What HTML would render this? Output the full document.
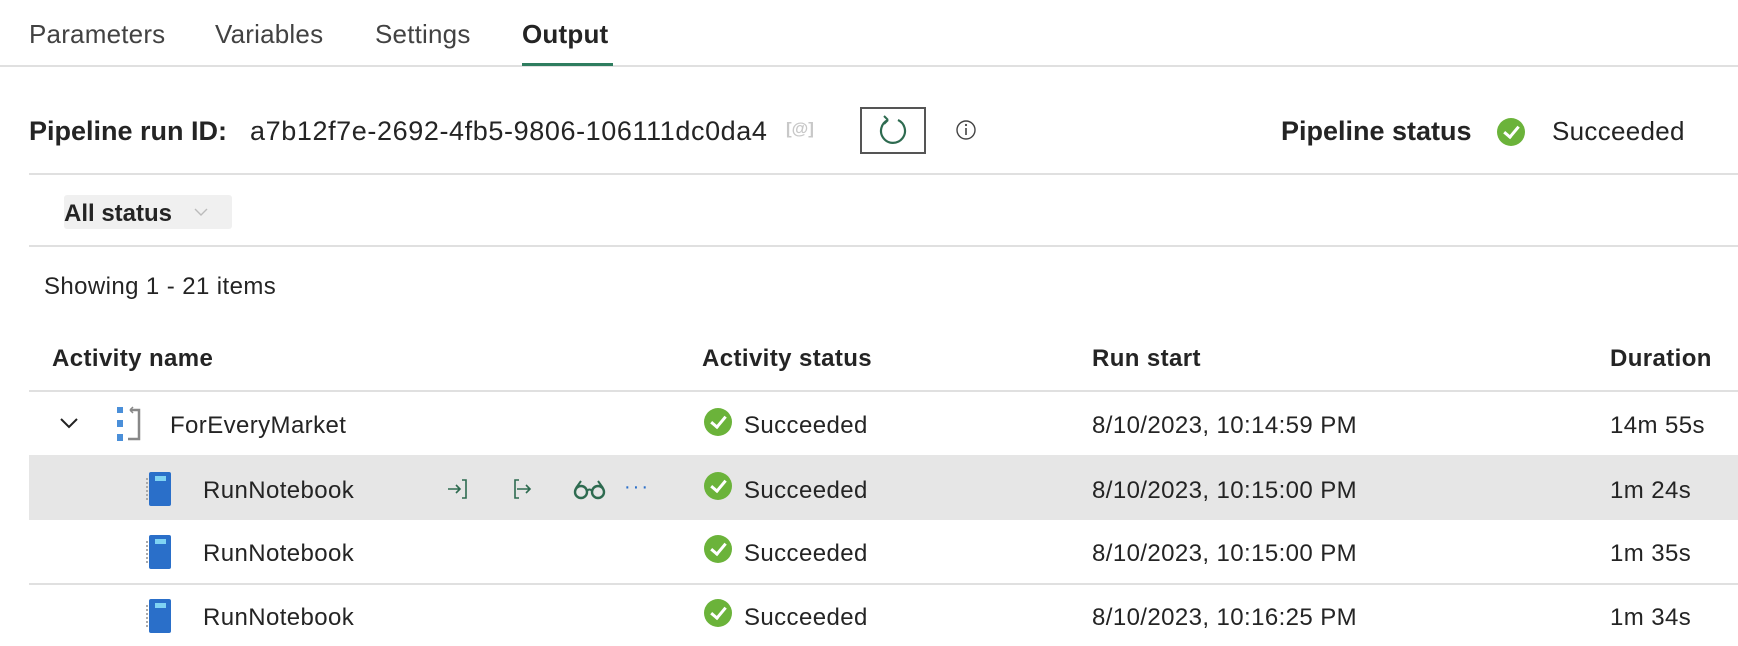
<!DOCTYPE html>
<html><head><meta charset="utf-8"><style>
*{margin:0;padding:0;box-sizing:border-box}
body{width:1738px;height:646px;background:#fff;font-family:"Liberation Sans",sans-serif;color:#242424;position:relative;overflow:hidden}
.a{position:absolute;white-space:nowrap}
.t{font-size:26px;color:#424242;top:19px;letter-spacing:0.2px}
.l{position:absolute;height:2px;background:#e0e0e0}
.r{font-size:24px;letter-spacing:0.4px}
.ck{position:absolute;width:28px;height:28px;border-radius:50%;background:#6bb33a}
.ck:after{content:"";position:absolute;left:10px;top:5px;width:6px;height:12px;border:solid #fff;border-width:0 3px 3px 0;transform:rotate(40deg)}
.nb{position:absolute;width:22px;height:34px;background:#2a6fc9;border-radius:2px}
.nb:before{content:"";position:absolute;left:6px;top:4px;width:11px;height:5px;background:#7fd3f3}
.nb:after{content:"";position:absolute;left:-3px;top:6px;width:3px;height:22px;border-left:2px dotted #aaa}
</style></head><body>
<div class="a t" style="left:29px">Parameters</div>
<div class="a t" style="left:215px">Variables</div>
<div class="a t" style="left:375px">Settings</div>
<div class="a t" style="left:522px;color:#242424;font-weight:600">Output</div>
<div class="l" style="left:0;width:1738px;top:65px"></div>
<div style="position:absolute;left:522px;width:91px;top:63px;height:3px;background:#2e7d5f"></div>

<div class="a" style="left:29px;top:116px;font-size:27px;font-weight:bold">Pipeline run ID:</div>
<div class="a" style="left:250px;top:116px;font-size:27px;letter-spacing:0.6px">a7b12f7e-2692-4fb5-9806-106111dc0da4</div>
<div class="a" style="left:786px;top:119px;font-size:17px;color:#c8c8c8;font-weight:bold">[@]</div>
<div style="position:absolute;left:860px;top:107px;width:66px;height:47px;border:2px solid #555"></div>
<svg class="a" style="left:876px;top:114px" width="34" height="34" viewBox="0 0 34 34"><path d="M12 6 A12 12 0 1 0 22 6" fill="none" stroke="#2e6b50" stroke-width="2.2"/><path d="M12 6 L8 2 M12 6 L8 10" stroke="#2e6b50" stroke-width="2" fill="none"/></svg>
<svg class="a" style="left:955px;top:119px" width="22" height="22"><circle cx="11" cy="11" r="9" fill="none" stroke="#444" stroke-width="1.4"/><line x1="11" y1="9" x2="11" y2="16" stroke="#444" stroke-width="1.6"/><circle cx="11" cy="6" r="1.1" fill="#444"/></svg>
<div class="a" style="left:1281px;top:116px;font-size:27px;font-weight:bold">Pipeline status</div>
<div class="ck" style="left:1497px;top:118px"></div>
<div class="a" style="left:1552px;top:116px;font-size:26px;letter-spacing:0.3px">Succeeded</div>
<div class="l" style="left:29px;width:1709px;top:173px"></div>

<div style="position:absolute;left:64px;top:195px;width:168px;height:34px;background:#f0f0f0;border-radius:3px"></div>
<div class="a" style="left:64px;top:200px;font-size:24px;font-weight:600">All status</div>
<svg class="a" style="left:193px;top:206px" width="16" height="12"><path d="M2 3 L8 9 L14 3" fill="none" stroke="#bbb" stroke-width="1.4"/></svg>
<div class="l" style="left:29px;width:1709px;top:245px"></div>

<div class="a r" style="left:44px;top:273px">Showing 1 - 21 items</div>
<div class="a r" style="left:52px;top:345px;font-weight:600">Activity name</div>
<div class="a r" style="left:702px;top:345px;font-weight:600">Activity status</div>
<div class="a r" style="left:1092px;top:345px;font-weight:600">Run start</div>
<div class="a r" style="left:1610px;top:345px;font-weight:600">Duration</div>
<div class="l" style="left:29px;width:1709px;top:390px"></div>

<svg class="a" style="left:59px;top:416px" width="20" height="14"><path d="M2 3 L10 11 L18 3" fill="none" stroke="#222" stroke-width="2"/></svg>
<svg class="a" style="left:116px;top:406px" width="28" height="36"><rect x="1" y="1" width="6" height="6" fill="#4a8fd9"/><rect x="1" y="14" width="6" height="7" fill="#4a8fd9"/><rect x="1" y="28" width="6" height="7" fill="#4a8fd9"/><path d="M14 4 H23 V33 H12" fill="none" stroke="#888" stroke-width="2.5"/><path d="M14 4 L17 1 M14 4 L17 7" stroke="#888" stroke-width="1.5"/></svg>
<div class="a r" style="left:170px;top:412px">ForEveryMarket</div>
<div class="ck" style="left:704px;top:408px"></div>
<div class="a r" style="left:744px;top:412px">Succeeded</div>
<div class="a r" style="left:1092px;top:412px">8/10/2023, 10:14:59 PM</div>
<div class="a r" style="left:1610px;top:412px">14m 55s</div>

<div style="position:absolute;left:29px;top:455px;width:1709px;height:65px;background:#e6e6e6"></div>
<div class="nb" style="left:149px;top:472px"></div>
<div class="a r" style="left:203px;top:477px">RunNotebook</div>
<svg class="a" style="left:446px;top:477px" width="110" height="24"><path d="M2 12 H14 M10 8 L14 12 L10 16 M16 3 H20 V21 H16" fill="none" stroke="#2e6b50" stroke-width="1.6"/><path d="M77 3 H73 V21 H77 M75 12 H88 M84 8 L88 12 L84 16" fill="none" stroke="#2e6b50" stroke-width="1.6" transform="translate(-4 0)"/></svg>
<svg class="a" style="left:573px;top:478px" width="34" height="22"><circle cx="8" cy="14" r="6" fill="none" stroke="#2e6b50" stroke-width="2.4"/><circle cx="25" cy="14" r="6" fill="none" stroke="#2e6b50" stroke-width="2.4"/><path d="M14 13 Q16.5 10 19 13 M3 10 L8 3 M30 10 L25 3" fill="none" stroke="#2e6b50" stroke-width="2"/></svg>
<div class="a" style="left:624px;top:476px;font-size:20px;color:#2a6fc9;letter-spacing:2px">···</div>
<div class="ck" style="left:704px;top:472px"></div>
<div class="a r" style="left:744px;top:477px">Succeeded</div>
<div class="a r" style="left:1092px;top:477px">8/10/2023, 10:15:00 PM</div>
<div class="a r" style="left:1610px;top:477px">1m 24s</div>

<div class="nb" style="left:149px;top:535px"></div>
<div class="a r" style="left:203px;top:540px">RunNotebook</div>
<div class="ck" style="left:704px;top:535px"></div>
<div class="a r" style="left:744px;top:540px">Succeeded</div>
<div class="a r" style="left:1092px;top:540px">8/10/2023, 10:15:00 PM</div>
<div class="a r" style="left:1610px;top:540px">1m 35s</div>
<div class="l" style="left:29px;width:1709px;top:583px"></div>

<div class="nb" style="left:149px;top:599px"></div>
<div class="a r" style="left:203px;top:604px">RunNotebook</div>
<div class="ck" style="left:704px;top:599px"></div>
<div class="a r" style="left:744px;top:604px">Succeeded</div>
<div class="a r" style="left:1092px;top:604px">8/10/2023, 10:16:25 PM</div>
<div class="a r" style="left:1610px;top:604px">1m 34s</div>
</body></html>
